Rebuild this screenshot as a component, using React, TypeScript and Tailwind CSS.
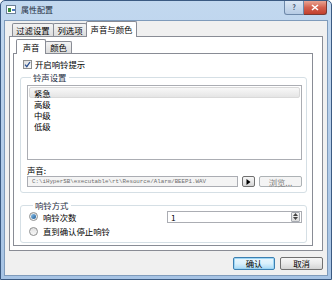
const btn =
  "flex items-center justify-center rounded-[2px] border border-[#707070] bg-gradient-to-b from-[#f6f6f6] via-[#e9e9e9] to-[#d4d4d4]";

function Tab({ label, w, selected }: { label: string; w: string; selected?: boolean }) {
  return selected ? (
    <div className={`${w} h-[16px] -ml-px relative z-10 flex items-center justify-center rounded-t-[2px] border border-b-0 border-[#898c95] bg-white`}>
      {label}
    </div>
  ) : (
    <div className={`${w} h-[13px] mb-px -ml-px first:ml-0 flex items-center justify-center rounded-t-[2px] border border-b-0 border-[#898c95] bg-gradient-to-b from-[#f4f4f4] to-[#dcdcdc]`}>
      {label}
    </div>
  );
}

function Radio({ checked }: { checked?: boolean }) {
  return (
    <span className="w-[9px] h-[9px] rounded-full border border-[#8e8f8f] bg-gradient-to-b from-[#e0e0e0] to-[#f8f8f8] flex items-center justify-center">
      {checked && <span className="w-[5px] h-[5px] rounded-full bg-gradient-to-br from-[#8fc7f0] to-[#1c5a93]" />}
    </span>
  );
}

export default function App() {
  const levels = ["紧急", "高级", "中级", "低级"];
  return (
    <div className="w-[335px] h-[282px] bg-white font-['Noto_Sans_CJK_SC','Liberation_Sans',sans-serif] text-[8.4px] leading-none text-black">
      <div className="w-[332px] h-[280px] flex flex-col rounded-t-[5px] border border-[#3b5a82] bg-gradient-to-b from-[#c2d8ef] via-[#b4cdea] to-[#a6c3e4]">
        {/* title bar */}
        <div className="h-[19px] flex items-start pl-[5px] pr-[4px]">
          <div className="mt-[4px] w-[10px] h-[9px] border border-[#6c7f98] bg-white flex items-center pl-px gap-px">
            <span className="w-[3px] h-[4px] bg-[#3a8c3a]" />
            <span className="w-[3px] h-[2px] bg-[#4a78c0]" />
          </div>
          <span className="ml-[5px] mt-[5px] text-[8px] text-[#1e2e42]">属性配置</span>
          <div className="ml-auto flex">
            <div className="w-[20px] h-[14px] rounded-bl-[3px] border border-[#6d88a9] border-t-0 bg-gradient-to-b from-[#dbe7f4] to-[#b6cbe4] flex items-center justify-center text-[7px] font-bold text-[#3c4f68]">?</div>
            <div className="w-[23px] h-[14px] rounded-br-[3px] border border-l-0 border-t-0 border-[#7a3a33] bg-gradient-to-b from-[#e8a493] via-[#d4604e] to-[#c2402e] flex items-center justify-center">
              <svg width="8" height="7" viewBox="0 0 8 7">
                <path d="M1 1L7 6M7 1L1 6" stroke="white" strokeWidth="1.6" />
              </svg>
            </div>
          </div>
        </div>

        {/* client */}
        <div className="mx-[3px] mb-[3px] flex-1 border border-[#7f9bbb] bg-[#f0f0f0] flex flex-col">
          <div className="flex items-end h-[16px] -mb-px pl-[7px]">
            <Tab label="过滤设置" w="w-[42px]" />
            <Tab label="列选项" w="w-[34px]" />
            <Tab label="声音与颜色" w="w-[51px]" selected />
          </div>

          <div className="ml-[4px] w-[314px] h-[215px] border border-[#898c95] bg-white flex flex-col">
            <div className="mt-[2px] flex items-end h-[15px] -mb-px pl-[6px]">
              <div className="w-[30px] h-[15px] relative z-10 flex items-center justify-center rounded-t-[2px] border border-b-0 border-[#898c95] bg-white">声音</div>
              <div className="w-[27px] h-[12px] mb-px -ml-px flex items-center justify-center rounded-t-[2px] border border-b-0 border-[#898c95] bg-gradient-to-b from-[#f4f4f4] to-[#dcdcdc]">颜色</div>
            </div>

            <div className="ml-[3px] w-[300px] h-[193px] border border-[#898c95] bg-white flex flex-col">
              {/* checkbox */}
              <div className="mt-[6px] ml-[9px] flex items-center gap-[3px] h-[9px]">
                <span className="w-[9px] h-[9px] border border-[#8e8f8f] bg-gradient-to-br from-[#dcdcdc] to-[#fafafa] flex items-center justify-center">
                  <svg width="7" height="7" viewBox="0 0 7 7">
                    <path d="M1 3.6L2.8 5.6L6 1" stroke="#2a4f8f" strokeWidth="1.3" fill="none" />
                  </svg>
                </span>
                <span>开启响铃提示</span>
              </div>

              {/* ring settings */}
              <fieldset className="mt-[4px] ml-[6px] w-[287px] rounded-[3px] border border-[#d5dfe5] pl-[6px] pb-[5px]">
                <legend className="ml-[4px] px-[2px] text-[#1e2e42]">铃声设置</legend>
                <div className="mt-[4px] w-[275px] h-[75px] border border-[#abadb3] bg-white p-px flex flex-col">
                  {levels.map((l, i) => (
                    <div
                      key={l}
                      className={`h-[11px] pl-[4px] flex items-center ${i === 0 ? "rounded-[2px] border border-[#d9d9d9] bg-gradient-to-b from-[#f8f8f8] to-[#e5e5e5]" : "border border-transparent"}`}
                    >
                      {l}
                    </div>
                  ))}
                </div>
                <div className="mt-[5px] h-[9px] flex items-center">声音:</div>
                <div className="mt-[2px] flex items-center h-[11px]">
                  <div className="w-[211px] h-[11px] border border-[#abadb3] bg-[#f4f4f4] flex items-center pl-[4px] font-['Liberation_Mono',monospace] text-[5.8px] text-[#6d6d6d] whitespace-nowrap overflow-hidden">
                    C:\iHyperSB\executable\rt\Resource/Alarm/BEEP1.WAV
                  </div>
                  <div className={`${btn} ml-[4px] w-[13px] h-[11px]`}>
                    <svg width="5" height="6" viewBox="0 0 5 6">
                      <path d="M0.5 0L4.5 3L0.5 6Z" fill="#000" />
                    </svg>
                  </div>
                  <div className="ml-[4px] w-[43px] h-[11px] rounded-[2px] border border-[#adb2b5] bg-[#f4f4f4] flex items-center justify-center text-[#838383]">浏览...</div>
                </div>
              </fieldset>

              {/* ring mode */}
              <fieldset className="mt-[8px] ml-[6px] w-[287px] rounded-[3px] border border-[#d5dfe5] pl-[8px] pb-[6px]">
                <legend className="ml-[4px] px-[2px] text-[#1e2e42]">响铃方式</legend>
                <div className="mt-px flex items-center h-[12px]">
                  <Radio checked />
                  <span className="ml-[5px]">响铃次数</span>
                  <div className="ml-auto mr-[4px] w-[135px] h-[12px] border border-[#abadb3] bg-white flex items-center">
                    <span className="pl-[3px] flex-1">1</span>
                    <div className="w-[9px] h-[10px] mr-px rounded-[1px] border border-[#a8acb3] bg-gradient-to-b from-[#f3f3f3] to-[#dcdcdc] flex flex-col items-center justify-center gap-px">
                      <svg width="5" height="3" viewBox="0 0 5 3"><path d="M0 3L2.5 0L5 3Z" fill="#444" /></svg>
                      <svg width="5" height="3" viewBox="0 0 5 3"><path d="M0 0L2.5 3L5 0Z" fill="#444" /></svg>
                    </div>
                  </div>
                </div>
                <div className="mt-[4px] flex items-center h-[9px]">
                  <Radio />
                  <span className="ml-[5px]">直到确认停止响铃</span>
                </div>
              </fieldset>
            </div>
          </div>

          {/* dialog buttons */}
          <div className="mt-[6px] ml-[4px] w-[314px] flex justify-end gap-[5px]">
            <div className="w-[42px] h-[13px] flex items-center justify-center rounded-[2px] border border-[#3c7fb1] bg-gradient-to-b from-[#eaf6fd] via-[#d9f0fc] to-[#a7d9f5] shadow-[inset_0_0_0_1px_#9ed6f5]">确认</div>
            <div className={`${btn} w-[43px] h-[13px]`}>取消</div>
          </div>
        </div>
      </div>
    </div>
  );
}
